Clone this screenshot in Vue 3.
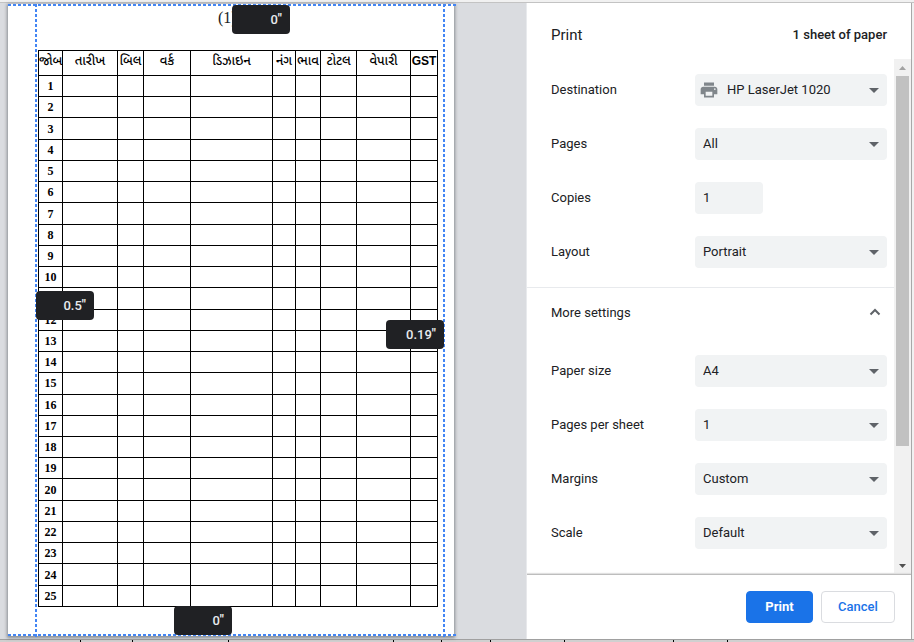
<script setup>
import { ref } from 'vue'

const columns = [
  { label: 'જોબ', width: 24 },
  { label: 'તારીખ', width: 55 },
  { label: 'બિલ', width: 26 },
  { label: 'વર્ક', width: 47 },
  { label: 'ડિઝાઇન', width: 82 },
  { label: 'નંગ', width: 23 },
  { label: 'ભાવ', width: 25 },
  { label: 'ટોટલ', width: 36 },
  { label: 'વેપારી', width: 54 },
  { label: 'GST', width: 27 },
]

const margins = ref([
  { side: 'top', value: '0' },
  { side: 'left', value: '0.5' },
  { side: 'right', value: '0.19' },
  { side: 'bottom', value: '0' },
])

const copies = ref('1')

const basic = [
  { id: 'destination', label: 'Destination', value: 'HP LaserJet 1020', icon: true },
  { id: 'pages', label: 'Pages', value: 'All' },
  { id: 'copies', label: 'Copies', input: true },
  { id: 'layout', label: 'Layout', value: 'Portrait' },
]
const more = [
  { id: 'paper', label: 'Paper size', value: 'A4' },
  { id: 'per-sheet', label: 'Pages per sheet', value: '1' },
  { id: 'margins', label: 'Margins', value: 'Custom' },
  { id: 'scale', label: 'Scale', value: 'Default' },
]
const groups = [
  { name: 'basic', rows: basic },
  { name: 'more', rows: more },
]

// Widths of the sheet cells that show below the dialog.
const cells = [81, 52, 96, 165, 48, 49, 74, 109, 54]
</script>

<template>
  <div class="screen">
    <div class="above"></div>
    <div class="middle">
      <main class="dialog">
        <section class="preview">
          <div class="page">
            <p class="title">(1)</p>
            <div class="sheet">
              <table>
                <colgroup>
                  <col v-for="c in columns" :key="c.label" :style="{ width: c.width + 'px' }" />
                </colgroup>
                <thead>
                  <tr>
                    <th v-for="c in columns" :key="c.label" scope="col" :class="{ latin: c.label === 'GST' }">{{ c.label }}</th>
                  </tr>
                </thead>
                <tbody>
                  <tr v-for="n in 25" :key="n">
                    <th scope="row">{{ n }}</th>
                    <td v-for="k in 9" :key="k"></td>
                  </tr>
                </tbody>
              </table>
            </div>
            <i class="guide across first"></i>
            <i class="guide across last"></i>
            <i class="guide down start"></i>
            <i class="guide down end"></i>
            <label v-for="m in margins" :key="m.side" class="margin" :class="m.side">
              <input v-model="m.value" type="text" :aria-label="m.side + ' margin'" />
              <span>"</span>
            </label>
          </div>
        </section>

        <aside class="settings">
          <header>
            <h1>Print</h1>
            <span>1 sheet of paper</span>
          </header>
          <div class="body">
            <div class="options">
              <template v-for="g in groups" :key="g.name">
                <button v-if="g.name === 'more'" type="button" class="expand">
                  <span>More settings</span>
                  <svg width="24" height="24" viewBox="0 0 24 24">
                    <path d="M7.5 14.5 12 10l4.5 4.5" fill="none" stroke="#5f6368" stroke-width="2" />
                  </svg>
                </button>
                <div class="group" :class="g.name">
                  <div v-for="r in g.rows" :key="r.id" class="row">
                    <label :for="r.id">{{ r.label }}</label>
                    <input v-if="r.input" :id="r.id" v-model="copies" type="text" class="field copies" />
                    <div v-else class="select">
                      <svg v-if="r.icon" class="printer" width="20" height="20" viewBox="0 0 24 24">
                        <path
                          fill="#80868b"
                          d="M19 8H5c-1.66 0-3 1.34-3 3v6h4v4h12v-4h4v-6c0-1.66-1.34-3-3-3zm-3 11H8v-5h8v5zm3-7c-.55 0-1-.45-1-1s.45-1 1-1 1 .45 1 1-.45 1-1 1zm-1-9H6v4h12V3z"
                        />
                      </svg>
                      <select :id="r.id" class="field" :class="{ withicon: r.icon }">
                        <option>{{ r.value }}</option>
                      </select>
                      <svg class="arrow" width="10" height="5" viewBox="0 0 10 5">
                        <path d="M0 0h10L5 5z" fill="#5f6368" />
                      </svg>
                    </div>
                  </div>
                </div>
              </template>
            </div>
            <div class="scrollbar">
              <svg width="17" height="17" viewBox="0 0 17 17"><path d="M5 11h7L8.5 7z" fill="#a3a3a3" /></svg>
              <div class="track"><div class="thumb"></div></div>
              <svg width="17" height="17" viewBox="0 0 17 17"><path d="M5 7h7l-3.5 4z" fill="#505050" /></svg>
            </div>
          </div>
          <footer>
            <button type="button" class="primary">Print</button>
            <button type="button" class="secondary">Cancel</button>
          </footer>
        </aside>
      </main>
      <div class="beside"></div>
    </div>
    <div class="below">
      <i v-for="(w, i) in cells" :key="i" :style="{ width: w + 'px' }"></i>
    </div>
  </div>
</template>

<style>
body {
  margin: 0;
}
</style>

<style scoped>
* {
  box-sizing: border-box;
}
.screen {
  display: flex;
  flex-direction: column;
  height: 100vh;
  font-family: Roboto, "Liberation Sans", sans-serif;
  font-size: 13px;
  color: #202124;
}
.above {
  height: 3px;
  background: #f1f1f1;
  border-bottom: 1px solid #c3c3c3;
}
.middle {
  flex: 1;
  min-height: 0;
  display: flex;
}
.beside {
  width: 3px;
  background: #f1f1f1;
  border-left: 1px solid #a8a8a8;
}
.below {
  height: 3px;
  display: flex;
  background: #d0d0d0;
  border-top: 1px solid #a0a0a0;
}
.below i {
  border-right: 1px solid #000;
}
.dialog {
  flex: 1;
  min-width: 0;
  display: flex;
  background: #fff;
}
.preview {
  flex: 1;
  min-width: 0;
  display: flex;
  padding: 1px 72px 3px 8px;
  background: #dadce0;
  border-right: 1px solid #e8eaed;
}
.page {
  flex: 1;
  position: relative;
  display: flex;
  flex-direction: column;
  padding: 0 16px 29px 30px;
  background: #fff;
  box-shadow: 0 1px 3px 1px rgba(60, 64, 67, 0.5);
}
.title {
  margin: 0;
  height: 46px;
  padding: 4px 0 0 180px;
  font: 16px/20px "Liberation Serif", serif;
}
.sheet {
  flex: 1;
  min-height: 0;
}
table {
  width: 100%;
  height: 100%;
  table-layout: fixed;
  border-collapse: collapse;
  color: #000;
}
th,
td {
  padding: 0;
  border: 1px solid #000;
}
thead th {
  height: 25px;
  font: 500 13px/20px "Liberation Sans", "Noto Sans Gujarati", "Lohit Gujarati", sans-serif;
  vertical-align: top;
  white-space: nowrap;
}
thead .latin {
  font-weight: 700;
  font-size: 12px;
}
tbody th {
  font: bold 12px/18px "Liberation Serif", serif;
}
.guide {
  position: absolute;
}
.across {
  left: 0;
  right: -2px;
  height: 2px;
  background: repeating-linear-gradient(90deg, #4285f4 0 3px, transparent 3px 5px);
}
.down {
  top: 0;
  bottom: -1px;
  width: 2px;
  background: repeating-linear-gradient(#4285f4 0 3px, transparent 3px 5px);
}
.first {
  top: 0;
}
.last {
  bottom: 0;
}
.start {
  left: 27px;
}
.end {
  right: 9px;
}
.margin {
  position: absolute;
  display: flex;
  width: 58px;
  height: 29px;
  padding: 0 8px;
  border-radius: 4px;
  background: #202124;
  color: #e8eaed;
  font-weight: 500;
}
.margin input {
  flex: 1;
  min-width: 0;
  padding: 0;
  border: 0;
  background: none;
  font: inherit;
  color: inherit;
  text-align: right;
}
.margin span {
  font-size: 13px;
  font-weight: 700;
  line-height: 28px;
}
.margin.top {
  top: 1px;
  left: 224px;
}
.margin.left {
  top: 287px;
  left: 28px;
}
.margin.right {
  top: 316px;
  right: 10px;
}
.margin.bottom {
  bottom: 1px;
  left: 166px;
}
.settings {
  width: 384px;
  display: flex;
  flex-direction: column;
}
header {
  height: 56px;
  display: flex;
  align-items: center;
  justify-content: space-between;
  padding: 8px 24px 0;
  font-weight: 500;
}
header span {
  padding-bottom: 2px;
}
h1 {
  margin: 0;
  font-size: 15px;
  font-weight: 400;
}
.body {
  flex: 1;
  min-height: 0;
  display: flex;
}
.options {
  flex: 1;
  overflow: hidden;
}
.group {
  display: flex;
  flex-direction: column;
  gap: 22px;
  padding: 15px 7px 19px 24px;
}
.group.more {
  padding-top: 19px;
}
.row {
  display: flex;
  align-items: center;
}
.row label {
  flex: 1;
  padding-bottom: 2px;
}
.field {
  width: 192px;
  height: 32px;
  padding: 0 8px 2px;
  border: 0;
  border-radius: 4px;
  appearance: none;
  background: #f1f3f4;
  font: inherit;
  color: inherit;
}
.copies {
  width: 68px;
  margin-right: 124px;
}
.select {
  position: relative;
  display: flex;
}
.withicon {
  padding-left: 32px;
}
.printer {
  position: absolute;
  top: 6px;
  left: 4px;
}
.arrow {
  position: absolute;
  top: 14px;
  right: 8px;
}
.expand {
  width: 100%;
  height: 49px;
  display: flex;
  align-items: center;
  justify-content: space-between;
  padding: 0 7px 0 24px;
  border: 0;
  border-top: 1px solid #e8eaed;
  background: none;
  font: inherit;
  color: inherit;
}
.scrollbar {
  width: 17px;
  display: flex;
  flex-direction: column;
  background: #f1f1f1;
}
.track {
  flex: 1;
  padding: 0 2px;
}
.thumb {
  height: 77%;
  background: #c1c1c1;
}
footer {
  display: flex;
  justify-content: flex-end;
  gap: 8px;
  padding: 16px;
  border-top: 1px solid #bdbdbd;
  box-shadow: 0 -1px 1px #e0e0e0;
}
footer button {
  height: 32px;
  padding: 0 16px 2px;
  border: 1px solid #dadce0;
  border-radius: 4px;
  background: #fff;
  color: #1a73e8;
  font: inherit;
  font-weight: 500;
}
footer .primary {
  width: 67px;
  border-color: #1a73e8;
  background: #1a73e8;
  color: #fff;
  font-weight: 700;
}
footer .secondary {
  width: 74px;
}
</style>
